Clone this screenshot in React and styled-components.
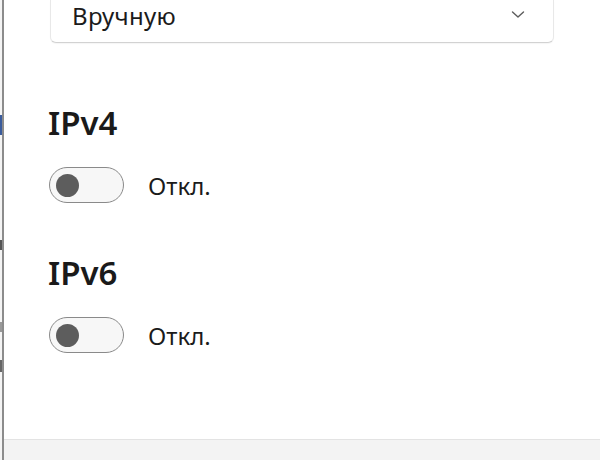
import React from "react";
import styled, { createGlobalStyle } from "styled-components";

const GlobalStyle = createGlobalStyle`
  html, body {
    margin: 0;
    padding: 0;
    width: 600px;
    height: 460px;
    overflow: hidden;
    background: #ffffff;
    font-family: "Noto Sans", "Open Sans", sans-serif;
  }
`;

const sections = [
  { title: "IPv4", state: "Откл." },
  { title: "IPv6", state: "Откл." },
];

const App = () => {
  return (
    <St.Page>
      <GlobalStyle />
      <St.Behind>
        <St.BehindMark $top={115} $height={20} $color="#3b5c9c" />
        <St.BehindMark $top={240} $height={10} $color="#555" />
        <St.BehindMark $top={322} $height={10} $color="#999" />
        <St.BehindMark $top={360} $height={12} $color="#666" />
      </St.Behind>
      <St.Dialog>
        <St.Content>
          <St.Select>
            <St.SelectText>Вручную</St.SelectText>
            <St.Chevron width="16" height="10" viewBox="0 0 16 10">
              <path
                d="M2.5 3 L8 8 L13.5 3"
                fill="none"
                stroke="#5c5c5c"
                strokeWidth="1.4"
                strokeLinecap="round"
                strokeLinejoin="round"
              />
            </St.Chevron>
          </St.Select>
          {sections.map((s) => (
            <St.Section key={s.title}>
              <St.Title>{s.title}</St.Title>
              <St.ToggleRow>
                <St.Toggle>
                  <St.Knob />
                </St.Toggle>
                <St.ToggleLabel>{s.state}</St.ToggleLabel>
              </St.ToggleRow>
            </St.Section>
          ))}
        </St.Content>
        <St.Footer />
      </St.Dialog>
    </St.Page>
  );
};

export default App;

const St = {
  Page: styled.div`
    display: flex;
    width: 600px;
    height: 460px;
  `,
  Behind: styled.div`
    position: relative;
    width: 2px;
    background: #f4f4f4;
    border-right: 2px solid #8c8c8c;
  `,
  BehindMark: styled.div`
    position: absolute;
    left: 0;
    top: ${({ $top }) => $top}px;
    width: 2px;
    height: ${({ $height }) => $height}px;
    background: ${({ $color }) => $color};
  `,
  Dialog: styled.div`
    flex: 1;
    display: flex;
    flex-direction: column;
    background: #ffffff;
  `,
  Content: styled.div`
    flex: 1;
    display: flex;
    flex-direction: column;
    padding: 0 0 0 46px;
  `,
  Select: styled.div`
    box-sizing: border-box;
    width: 504px;
    height: 43px;
    padding: 4px 22px 15px 21px;
    display: flex;
    align-items: center;
    justify-content: space-between;
    background: #ffffff;
    border: 1px solid #e8e8e8;
    border-top: none;
    border-bottom-color: #d2d2d2;
    border-radius: 0 0 6px 6px;
    box-shadow: 0 1px 1px rgba(0, 0, 0, 0.04);
  `,
  SelectText: styled.span`
    font-size: 24px;
    line-height: 24px;
    color: #1b1b1b;
    letter-spacing: 0.3px;
  `,
  Chevron: styled.svg`
    margin-right: 5px;
    margin-top: -4px;
  `,
  Section: styled.div`
    display: flex;
    flex-direction: column;
    margin-top: 60px;
    & + & {
      margin-top: 50px;
    }
  `,
  Title: styled.div`
    font-size: 33px;
    font-weight: 600;
    line-height: 40px;
    color: #1a1a1a;
    margin-left: -2px;
  `,
  ToggleRow: styled.div`
    display: flex;
    align-items: center;
    gap: 24px;
    margin-top: 24px;
  `,
  Toggle: styled.div`
    box-sizing: border-box;
    width: 75px;
    height: 36px;
    border: 1.5px solid #8a8a8a;
    border-radius: 18px;
    background: #f7f7f7;
    display: flex;
    align-items: center;
    padding-left: 6px;
    margin-left: -1px;
  `,
  Knob: styled.div`
    width: 23px;
    height: 23px;
    border-radius: 50%;
    background: #5d5d5d;
  `,
  ToggleLabel: styled.span`
    font-size: 24px;
    color: #1b1b1b;
  `,
  Footer: styled.div`
    height: 20px;
    background: #f3f3f3;
    border-top: 1px solid #e3e3e3;
  `,
};
